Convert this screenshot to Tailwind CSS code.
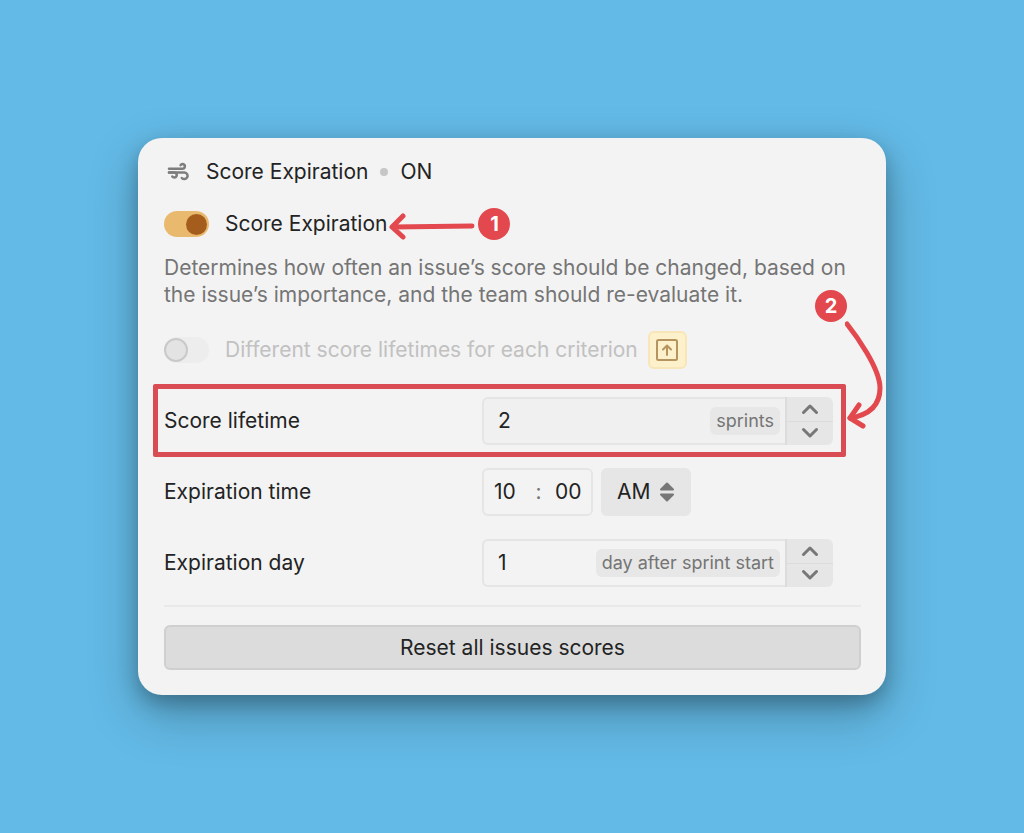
<!DOCTYPE html>
<html lang="en">
<head>
  <meta charset="UTF-8" />
  <meta name="viewport" content="width=device-width, initial-scale=1.0" />
  <title>Score Expiration</title>
  <script src="https://cdn.jsdelivr.net/npm/@tailwindcss/browser@4"></script>
</head>
<body class="min-h-screen flex items-center justify-center bg-[#63bae6] font-['Inter',sans-serif] text-[21px] text-[#232323]">

  <main class="w-full max-w-[748px] rounded-3xl bg-[#f3f3f3] pl-[26px] pr-[25px] pt-5 pb-[25px] shadow-[0_20px_50px_rgba(0,0,0,0.25),0_8px_20px_rgba(0,0,0,0.25)]">

    <!-- Header -->
    <header class="flex h-7 items-center">
      <svg class="ml-[3px] mr-4 h-6 w-[23px]" viewBox="0 0 23 24" fill="none" stroke="#7d7d7d" stroke-width="2.500" stroke-linecap="round" stroke-linejoin="round" aria-hidden="true">
        <path d="M2 8.700H15.500A2.300 2.300 0 1 0 13.600 5.200" />
        <path d="M2 12.500H17.500A3.300 3.300 0 1 1 14.800 18" />
        <path d="M2 12.500H7.500A2.500 2.500 0 1 1 5.300 16.500" />
      </svg>
      <h1>Score Expiration</h1>
      <span class="mx-3 size-2 rounded-full bg-[#c6c6c6]"></span>
      <span>ON</span>
    </header>

    <!-- Main toggle -->
    <div class="mt-[25px] flex h-[26px] items-center">
      <input id="expiration" type="checkbox" role="switch" checked class="sr-only" />
      <label for="expiration" class="flex items-center gap-4 whitespace-nowrap">
        <span class="flex h-[26px] w-[45px] items-center justify-end rounded-full bg-[#e9b96e] px-0.5">
          <span class="size-[21px] rounded-full bg-[#a55d1e]"></span>
        </span>
        Score Expiration
      </label>
      <svg class="ml-0.5 h-8 w-[87px] shrink-0" viewBox="0 0 87 32" fill="none" stroke="#e2484d" stroke-width="5" stroke-linecap="round" stroke-linejoin="round" aria-hidden="true">
        <path d="M4 19L83 18M14 8L3 19L14 29" />
      </svg>
      <span class="ml-0.5 flex size-8 shrink-0 items-center justify-center rounded-full bg-[#e2484d] text-xl font-bold text-white">1</span>
    </div>

    <p class="mt-[17px] max-w-[690px] leading-[27px] text-[#757575]">Determines how often an issue’s score should be changed, based on the issue’s importance, and the team should re-evaluate it.</p>

    <!-- Per-criterion toggle -->
    <div class="mt-[23px] flex h-[38px] items-center gap-2.5">
      <input id="criterion" type="checkbox" role="switch" disabled class="sr-only" />
      <label for="criterion" class="flex items-center gap-4 text-[#c1c1c1]">
        <span class="flex h-[26px] w-[45px] items-center rounded-full bg-[#ededed]">
          <span class="size-6 rounded-full border-2 border-[#c9c9c9] bg-[#e3e3e3]"></span>
        </span>
        Different score lifetimes for each criterion
      </label>
      <button type="button" aria-label="Upgrade" class="flex h-[38px] w-[39px] items-center justify-center rounded-md border-2 border-[#f9e6b8] bg-[#fdf1cb]">
        <svg class="size-6" viewBox="0 0 24 24" fill="none" stroke="#b5945f" stroke-width="2" stroke-linecap="round" stroke-linejoin="round" aria-hidden="true">
          <rect x="2" y="2" width="20" height="20" rx="1.500" />
          <path d="M12 17V7.500M8 11.500L12 7.500L16 11.500" />
        </svg>
      </button>
    </div>

    <!-- Fields -->
    <form class="mt-7 flex flex-col gap-[23px]">
      <div class="relative flex h-12 items-center pr-7">
        <label for="lifetime" class="w-[318px] shrink-0">Score lifetime</label>
        <div class="flex h-12 min-w-0 flex-1">
          <div class="flex min-w-0 flex-1 rounded-l-md border-2 border-r-0 border-[#e5e5e5] bg-[#f0f0f0]">
            <input id="lifetime" type="text" inputmode="numeric" value="2" class="min-w-0 flex-1 bg-transparent pl-3.5 outline-none" />
            <span class="mr-[5px] h-7 shrink-0 self-center rounded-md bg-[#e7e7e7] px-1.5 text-lg leading-7 text-[#757575]">sprints</span>
          </div>
          <div class="flex w-12 shrink-0 flex-col rounded-r-md border-l-2 border-[#dcdcdc] bg-[#e6e6e6]">
            <button type="button" aria-label="Increase" class="flex flex-1 items-center justify-center border-b border-[#dcdcdc]">
              <svg class="h-3 w-5" viewBox="0 0 20 12" fill="none" stroke="#777" stroke-width="3" stroke-linecap="round" stroke-linejoin="round"><path d="M3.500 9.500L10 3L16.500 9.500" /></svg>
            </button>
            <button type="button" aria-label="Decrease" class="flex flex-1 items-center justify-center">
              <svg class="h-3 w-5" viewBox="0 0 20 12" fill="none" stroke="#777" stroke-width="3" stroke-linecap="round" stroke-linejoin="round"><path d="M3.500 2.500L10 9L16.500 2.500" /></svg>
            </button>
          </div>
        </div>

        <!-- Callout 2 -->
        <div class="pointer-events-none absolute -top-[13px] -bottom-3 -left-[11px] right-[15px] rounded-xs border-5 border-[#d94c54]"></div>
        <span class="absolute -top-[107px] right-3.5 flex size-8 items-center justify-center rounded-full bg-[#e2484d] text-xl font-bold text-white">2</span>
        <svg class="pointer-events-none absolute -top-[77px] -right-6 h-[112px] w-10" viewBox="0 0 40 112" fill="none" stroke="#e2484d" stroke-width="5" stroke-linecap="round" stroke-linejoin="round" aria-hidden="true">
          <path d="M2 4C10 14 35 48 35 68C35 86 24 95 5 98" />
          <path d="M14 85L5 98L18 106" />
        </svg>
      </div>

      <div class="flex h-12 items-center pr-7">
        <label for="hour" class="w-[318px] shrink-0">Expiration time</label>
        <div class="flex h-12 w-[111px] items-center justify-between rounded-md border-2 border-[#e5e5e5] pl-2.5 pr-2">
          <input id="hour" type="text" inputmode="numeric" value="10" class="w-7 bg-transparent outline-none" />
          <span class="text-[#757575]">:</span>
          <input type="text" inputmode="numeric" aria-label="Minutes" value="00" class="w-7 bg-transparent outline-none" />
        </div>
        <div class="relative ml-2">
          <select aria-label="AM or PM" class="h-12 w-[90px] appearance-none rounded-md bg-[#e6e6e6] pl-4 outline-none">
            <option>AM</option>
            <option>PM</option>
          </select>
          <svg class="pointer-events-none absolute top-3.5 right-4 h-5 w-4" viewBox="0 0 16 20" fill="#777" stroke="#777" stroke-width="2" stroke-linejoin="round" aria-hidden="true">
            <path d="M8 1.500L14 7.500H2ZM8 18.500L14 12.500H2Z" />
          </svg>
        </div>
      </div>

      <div class="flex h-12 items-center pr-7">
        <label for="day" class="w-[318px] shrink-0">Expiration day</label>
        <div class="flex h-12 min-w-0 flex-1">
          <div class="flex min-w-0 flex-1 rounded-l-md border-2 border-r-0 border-[#e5e5e5]">
            <input id="day" type="text" inputmode="numeric" value="1" class="min-w-0 flex-1 bg-transparent pl-3.5 outline-none" />
            <span class="mr-[5px] h-7 shrink-0 self-center rounded-md bg-[#e7e7e7] px-1.5 text-lg leading-7 text-[#757575]">day after sprint start</span>
          </div>
          <div class="flex w-12 shrink-0 flex-col rounded-r-md border-l-2 border-[#dcdcdc] bg-[#e6e6e6]">
            <button type="button" aria-label="Increase" class="flex flex-1 items-center justify-center border-b border-[#dcdcdc]">
              <svg class="h-3 w-5" viewBox="0 0 20 12" fill="none" stroke="#777" stroke-width="3" stroke-linecap="round" stroke-linejoin="round"><path d="M3.500 9.500L10 3L16.500 9.500" /></svg>
            </button>
            <button type="button" aria-label="Decrease" class="flex flex-1 items-center justify-center">
              <svg class="h-3 w-5" viewBox="0 0 20 12" fill="none" stroke="#777" stroke-width="3" stroke-linecap="round" stroke-linejoin="round"><path d="M3.500 2.500L10 9L16.500 2.500" /></svg>
            </button>
          </div>
        </div>
      </div>
    </form>

    <hr class="mt-[18px] mb-[18px] border-t-2 border-[#e9e9e9]" />

    <button type="button" class="h-[45px] w-full rounded-md border-2 border-[#cfcfcf] bg-[#dcdcdc]">Reset all issues scores</button>
  </main>

</body>
</html>
